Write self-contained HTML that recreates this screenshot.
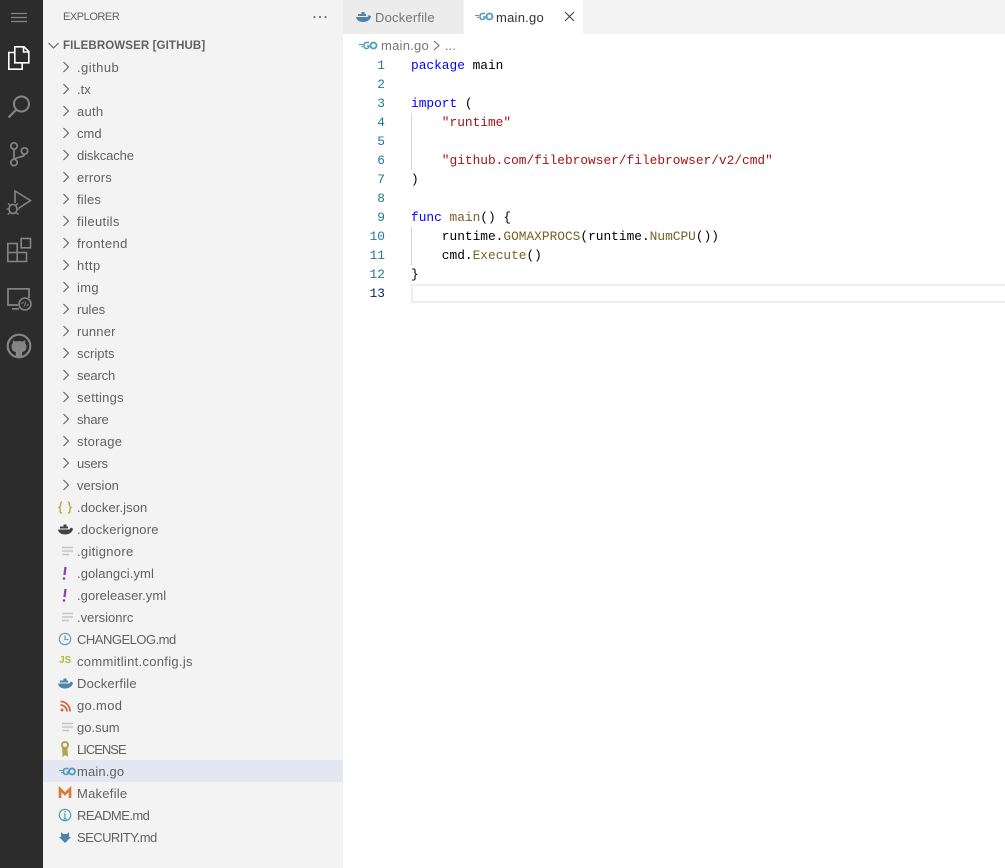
<!DOCTYPE html>
<html><head><meta charset="utf-8"><style>
html,body{margin:0;padding:0;width:1005px;height:868px;overflow:hidden;background:#fff}
body{position:relative;font-family:"Liberation Sans",sans-serif;font-size:13px;color:#616161}
div{position:absolute;white-space:pre}
svg{position:absolute;overflow:visible}
#act{left:0;top:0;width:43px;height:868px;background:#2c2c2c}
#side{left:43px;top:0;width:300px;height:868px;background:#f3f3f3}
.r{left:77px;height:22px;line-height:22px;margin-top:1px}
.code{left:411px;height:19px;line-height:19px;font-family:"Liberation Mono",monospace;font-size:12.83px;color:#000}
.n{left:343px;width:42px;text-align:right;height:19px;line-height:19px;font-family:"Liberation Mono",monospace;font-size:12.83px;color:#237893}
b{font-weight:normal}.k{color:#00f}.s{color:#a31515}.f{color:#795e26}
</style></head><body>
<div id="act"></div><div id="side"></div>
<svg style="left:0;top:0" width="43" height="360" fill="none" stroke="#858585" stroke-width="1.2">
<path d="M11 13.500H27M11 17.500H27M11 21.500H27"/>
<g stroke="#fff" stroke-width="1.600"><path d="M14.500 52.500 H8.800 V69.200 H22.200 V63 M14.800 46.800 H24 L28.800 51.500 V62.800 H14.800Z M23.500 47 V52 H28.500"/></g>
<circle cx="21.500" cy="104" r="7.500" stroke-width="2"/><path d="M16 110 L8.500 117.500" stroke-width="2.200"/>
<circle cx="14" cy="146" r="3.200" stroke-width="1.700"/><circle cx="14" cy="162.500" r="3.200" stroke-width="1.700"/><circle cx="24.500" cy="151" r="3.200" stroke-width="1.700"/><path d="M14 149 V159 M24.500 154 C24.500 158 16 156 14 160" stroke-width="1.700"/>
<path d="M15 203 V191 L30.500 200.500 L19 208" stroke-width="1.600"/><ellipse cx="13" cy="209" rx="4" ry="4.500" stroke-width="1.600"/><path d="M8 203.500 L10.500 205.500 M18 203.500 L15.500 205.500 M6.500 209 H9 M17 209 H19.500 M7.500 214.500 L10 212.500 M18.500 214.500 L16 212.500" stroke-width="1.300"/>
<path d="M7.800 243.500 H17.200 V261.500 H7.800Z M7.800 252.500 H26.500 V261.500 H7.800Z" stroke-width="1.600"/><rect x="21.200" y="238.500" width="9.300" height="9.300" stroke-width="1.600"/>
<path d="M18 305 H8 V288.800 H29 V298 M12 308.800 H19" stroke-width="1.700"/><circle cx="25" cy="304" r="6" stroke-width="1.600"/><path d="M21.500 304 L23.500 302 M26.500 306 L28.500 304 M24 306.500 L26 301.500" stroke-width="1"/>
<circle cx="19" cy="346" r="11.300" stroke-width="2.200"/><path d="M15.800 356.500 V352 C12.500 351.500 11.500 349 11.500 346.500 C11.500 345 12 344 12.800 343.200 L12.800 340.300 L15.500 341.500 C17.500 341 20.500 341 22.500 341.500 L25.200 340.300 L25.200 343.200 C26 344 26.500 345 26.500 346.500 C26.500 349 25.500 351.500 22.200 352 V356.500Z" fill="#858585" stroke="none"/>
</svg>
<div style="left:63px;top:9px;font-size:11px;line-height:16px;letter-spacing:-.45px">EXPLORER</div>
<svg style="left:313px;top:15px" width="14" height="4" fill="#616161"><circle cx="1.500" cy="2" r="1"/><circle cx="7" cy="2" r="1"/><circle cx="12.500" cy="2" r="1"/></svg>
<svg style="left:48px;top:42px" width="11" height="8" fill="none" stroke="#616161" stroke-width="1.100"><path d="M.5 1 L5.500 6 L10.500 1"/></svg>
<div class="r" style="left:63px;top:34px;font-size:11.500px;font-weight:bold;letter-spacing:.12px">FILEBROWSER [GITHUB]</div>
<div style="left:43px;top:760px;width:300px;height:22px;background:#e4e6f1"></div>
<svg style="left:0;top:0" width="80" height="500" fill="none" stroke="#616161" stroke-width="1.100"><path d="M63.500 62 L68.500 67 L63.500 72 M63.500 84 L68.500 89 L63.500 94 M63.500 106 L68.500 111 L63.500 116 M63.500 128 L68.500 133 L63.500 138 M63.500 150 L68.500 155 L63.500 160 M63.500 172 L68.500 177 L63.500 182 M63.500 194 L68.500 199 L63.500 204 M63.500 216 L68.500 221 L63.500 226 M63.500 238 L68.500 243 L63.500 248 M63.500 260 L68.500 265 L63.500 270 M63.500 282 L68.500 287 L63.500 292 M63.500 304 L68.500 309 L63.500 314 M63.500 326 L68.500 331 L63.500 336 M63.500 348 L68.500 353 L63.500 358 M63.500 370 L68.500 375 L63.500 380 M63.500 392 L68.500 397 L63.500 402 M63.500 414 L68.500 419 L63.500 424 M63.500 436 L68.500 441 L63.500 446 M63.500 458 L68.500 463 L63.500 468 M63.500 480 L68.500 485 L63.500 490"/></svg>
<div class="r" style="top:56px;letter-spacing:.45px">.github</div>
<div class="r" style="top:78px">.tx</div>
<div class="r" style="top:100px;letter-spacing:.25px">auth</div>
<div class="r" style="top:122px">cmd</div>
<div class="r" style="top:144px;letter-spacing:-.1px">diskcache</div>
<div class="r" style="top:166px;letter-spacing:.17px">errors</div>
<div class="r" style="top:188px;letter-spacing:.2px">files</div>
<div class="r" style="top:210px;letter-spacing:.33px">fileutils</div>
<div class="r" style="top:232px;letter-spacing:.37px">frontend</div>
<div class="r" style="top:254px;letter-spacing:.5px">http</div>
<div class="r" style="top:276px;letter-spacing:.33px">img</div>
<div class="r" style="top:298px">rules</div>
<div class="r" style="top:320px;letter-spacing:.17px">runner</div>
<div class="r" style="top:342px">scripts</div>
<div class="r" style="top:364px;letter-spacing:-.17px">search</div>
<div class="r" style="top:386px;letter-spacing:.25px">settings</div>
<div class="r" style="top:408px;letter-spacing:-.2px">share</div>
<div class="r" style="top:430px;letter-spacing:.28px">storage</div>
<div class="r" style="top:452px;letter-spacing:-.2px">users</div>
<div class="r" style="top:474px">version</div>
<div class="r" style="top:496px;letter-spacing:.08px">.docker.json</div>
<div class="r" style="top:518px;letter-spacing:.23px">.dockerignore</div>
<div class="r" style="top:540px;letter-spacing:.3px">.gitignore</div>
<div class="r" style="top:562px;letter-spacing:.08px">.golangci.yml</div>
<div class="r" style="top:584px;letter-spacing:.07px">.goreleaser.yml</div>
<div class="r" style="top:606px">.versionrc</div>
<div class="r" style="top:628px;letter-spacing:-.5px">CHANGELOG.md</div>
<div class="r" style="top:650px;letter-spacing:.3px">commitlint.config.js</div>
<div class="r" style="top:672px;letter-spacing:.2px">Dockerfile</div>
<div class="r" style="top:694px;letter-spacing:.33px">go.mod</div>
<div class="r" style="top:716px">go.sum</div>
<div class="r" style="top:738px;letter-spacing:-1px">LICENSE</div>
<div class="r" style="top:760px;letter-spacing:.14px">main.go</div>
<div class="r" style="top:782px;letter-spacing:.25px">Makefile</div>
<div class="r" style="top:804px;letter-spacing:-.55px">README.md</div>
<div class="r" style="top:826px;letter-spacing:-.55px">SECURITY.md</div>
<svg style="left:0;top:0" width="80" height="868" fill="none">
<path d="M62 502 C60 502 61 505 60 506.500 C59.500 507 59 507.500 59 507.500 C60 508 60.500 509 60 511 C60 512.500 61 513 62 513 M68 502 C70 502 69 505 70 506.500 L71 507.500 C70 508 69.500 509 70 511 C70 512.500 69 513 68 513" stroke="#b4b43c" stroke-width="1.500"/>
<path d="M58 529.500 H69 C70 529.500 70.500 527.500 71 527.500 C71.500 528 73 528.500 73 529 C72 532.500 69.500 534.500 65 534.500 C61 534.500 58.500 532.500 58 529.500Z M60 528.500 V526.500 H68 V528.500Z M63.500 526.500 V524.500 H66.500 V526.500Z" fill="#424242"/>
<path d="M62 547.500 H73 M62 551 H73 M62 554.500 H69" stroke="#c5c5c5" stroke-width="1.500"/>
<path d="M65.500 567 L64.500 575" stroke="#8e44ad" stroke-width="2.300"/><circle cx="64" cy="578.500" r="1.300" fill="#8e44ad"/>
<path d="M65.500 589 L64.500 597" stroke="#8e44ad" stroke-width="2.300"/><circle cx="64" cy="600.500" r="1.300" fill="#8e44ad"/>
<path d="M62 613.500 H73 M62 617 H73 M62 620.500 H69" stroke="#c5c5c5" stroke-width="1.500"/>
<circle cx="65" cy="639" r="5.700" stroke="#6a9fb5" stroke-width="1.200"/><path d="M65 635.500 V639.500 H68.500" stroke="#6a9fb5" stroke-width="1.200"/>
<path d="M58 683.500 H69 C70 683.500 70.500 681.500 71 681.500 C71.500 682 73 682.500 73 683 C72 686.500 69.500 688.500 65 688.500 C61 688.500 58.500 686.500 58 683.500Z M60 682.500 V680.500 H68 V682.500Z M63.500 680.500 V678.500 H66.500 V680.500Z" fill="#4d84a8"/>
<circle cx="62" cy="710" r="1.500" fill="#d9683a"/><path d="M60.500 705 C64 705 67 708 67 711.500 M60.500 701.500 C66 701.500 70 706 70 711.500" stroke="#d9683a" stroke-width="1.800"/>
<path d="M62 723.500 H73 M62 727 H73 M62 730.500 H69" stroke="#c5c5c5" stroke-width="1.500"/>
<circle cx="65" cy="745" r="3" stroke="#a8a84f" stroke-width="2"/><path d="M62.500 748 L63 756 L65 754.500 L67.500 756 L67 748Z" fill="#a8a84f" stroke="#a8a84f" stroke-width="1"/>
<path d="M60 798 V789 L65 794 L70 789 V798" stroke="#d9773c" stroke-width="2.600"/>
<circle cx="65" cy="815" r="5.700" stroke="#519aba" stroke-width="1.200"/><path d="M65 814 V819 M63.500 819 H66.500 M64 814 H65" stroke="#519aba" stroke-width="1.200"/><circle cx="65" cy="811.700" r=".8" fill="#519aba"/>
<path d="M61 832 L63 834 H67 L69 832 V837 L71 837 L65 843 L59 837 L61 837Z" fill="#4d84a8"/>
</svg>
<div style="left:59px;top:655px;font-size:10px;line-height:12px;font-weight:bold;color:#b7b73b">JS</div>
<div style="left:343px;top:0;width:662px;height:34px;background:#f3f3f3"></div>
<div style="left:343px;top:0;width:120px;height:34px;background:#ececec"></div>
<div style="left:464px;top:0;width:119px;height:34px;background:#fff"></div>
<svg style="left:0;top:0" width="600" height="60" fill="none">
<path d="M356 17 H367 C368 17 368.500 15 369 15 C369.500 15.500 371 16 371 16.500 C370 20 367.500 22 363 22 C359 22 356.500 20 356 17Z M358 16 V14 H366 V16Z M361.500 14 V12 H364.500 V14Z" fill="#4d84a8"/>
<path d="M565 12 L574 21 M574 12 L565 21" stroke="#424242" stroke-width="1.100"/>
<path d="M434 41 L439 45.500 L434 50" stroke="#616161" stroke-width="1"/>
<g stroke="#519aba" stroke-width="1.500"><path d="M475 15.500 H479 M477 17.500 H479" stroke-width="1"/><path d="M485 13.500 H482.500 C480.500 13.500 480 15 480 16.500 C480 18 480.500 19.500 482.500 19.500 C484 19.500 485 18.500 485 17 H483"/><circle cx="489.500" cy="16.500" r="3" stroke-width="1.800"/></g>
<g stroke="#519aba" stroke-width="1.500"><path d="M359 44.500 H363 M361 46.500 H363" stroke-width="1"/><path d="M369 42.500 H366.500 C364.500 42.500 364 44 364 45.500 C364 47 364.500 48.500 366.500 48.500 C368 48.500 369 47.500 369 46 H367"/><circle cx="373.500" cy="45.500" r="3" stroke-width="1.800"/></g>
</svg>
<svg style="left:58px;top:764px" width="18" height="14" fill="none" stroke="#519aba" stroke-width="1.600"><path d="M1 6.500 H5 M3 8.500 H5" stroke-width="1"/><path d="M10.500 4.500 H8 C6 4.500 5.500 6 5.500 7.500 C5.500 9 6 10.500 8 10.500 C9.500 10.500 10.500 9.500 10.500 8 H8.500"/><circle cx="14" cy="7.500" r="3" stroke-width="1.900"/></svg>
<div style="left:375px;top:9px;line-height:17px;color:#757575;letter-spacing:.2px">Dockerfile</div>
<div style="left:496px;top:9px;line-height:17px;color:#333;letter-spacing:.25px">main.go</div>
<div style="left:381px;top:37px;line-height:17px;color:#757575;letter-spacing:.25px">main.go</div>
<div style="left:445px;top:37px;line-height:17px;color:#757575">...</div>
<div style="left:411px;top:284px;width:594px;height:15px;border:2px solid #eee;border-right:0"></div>
<div style="left:411px;top:113px;width:1px;height:57px;background:#d3d3d3"></div>
<div style="left:411px;top:227px;width:1px;height:38px;background:#d3d3d3"></div>
<div class="n" style="top:56px">1</div><div class="n" style="top:75px">2</div><div class="n" style="top:94px">3</div><div class="n" style="top:113px">4</div><div class="n" style="top:132px">5</div><div class="n" style="top:151px">6</div><div class="n" style="top:170px">7</div><div class="n" style="top:189px">8</div><div class="n" style="top:208px">9</div><div class="n" style="top:227px">10</div><div class="n" style="top:246px">11</div><div class="n" style="top:265px">12</div><div class="n" style="top:284px;color:#0b216f">13</div>
<div class="code" style="top:56px"><b class="k">package</b> main</div>
<div class="code" style="top:94px"><b class="k">import</b> (</div>
<div class="code" style="top:113px">    <b class="s">"runtime"</b></div>
<div class="code" style="top:151px">    <b class="s">"github.com/filebrowser/filebrowser/v2/cmd"</b></div>
<div class="code" style="top:170px">)</div>
<div class="code" style="top:208px"><b class="k">func</b> <b class="f">main</b>() {</div>
<div class="code" style="top:227px">    runtime.<b class="f">GOMAXPROCS</b>(runtime.<b class="f">NumCPU</b>())</div>
<div class="code" style="top:246px">    cmd.<b class="f">Execute</b>()</div>
<div class="code" style="top:265px">}</div>
</body></html>
